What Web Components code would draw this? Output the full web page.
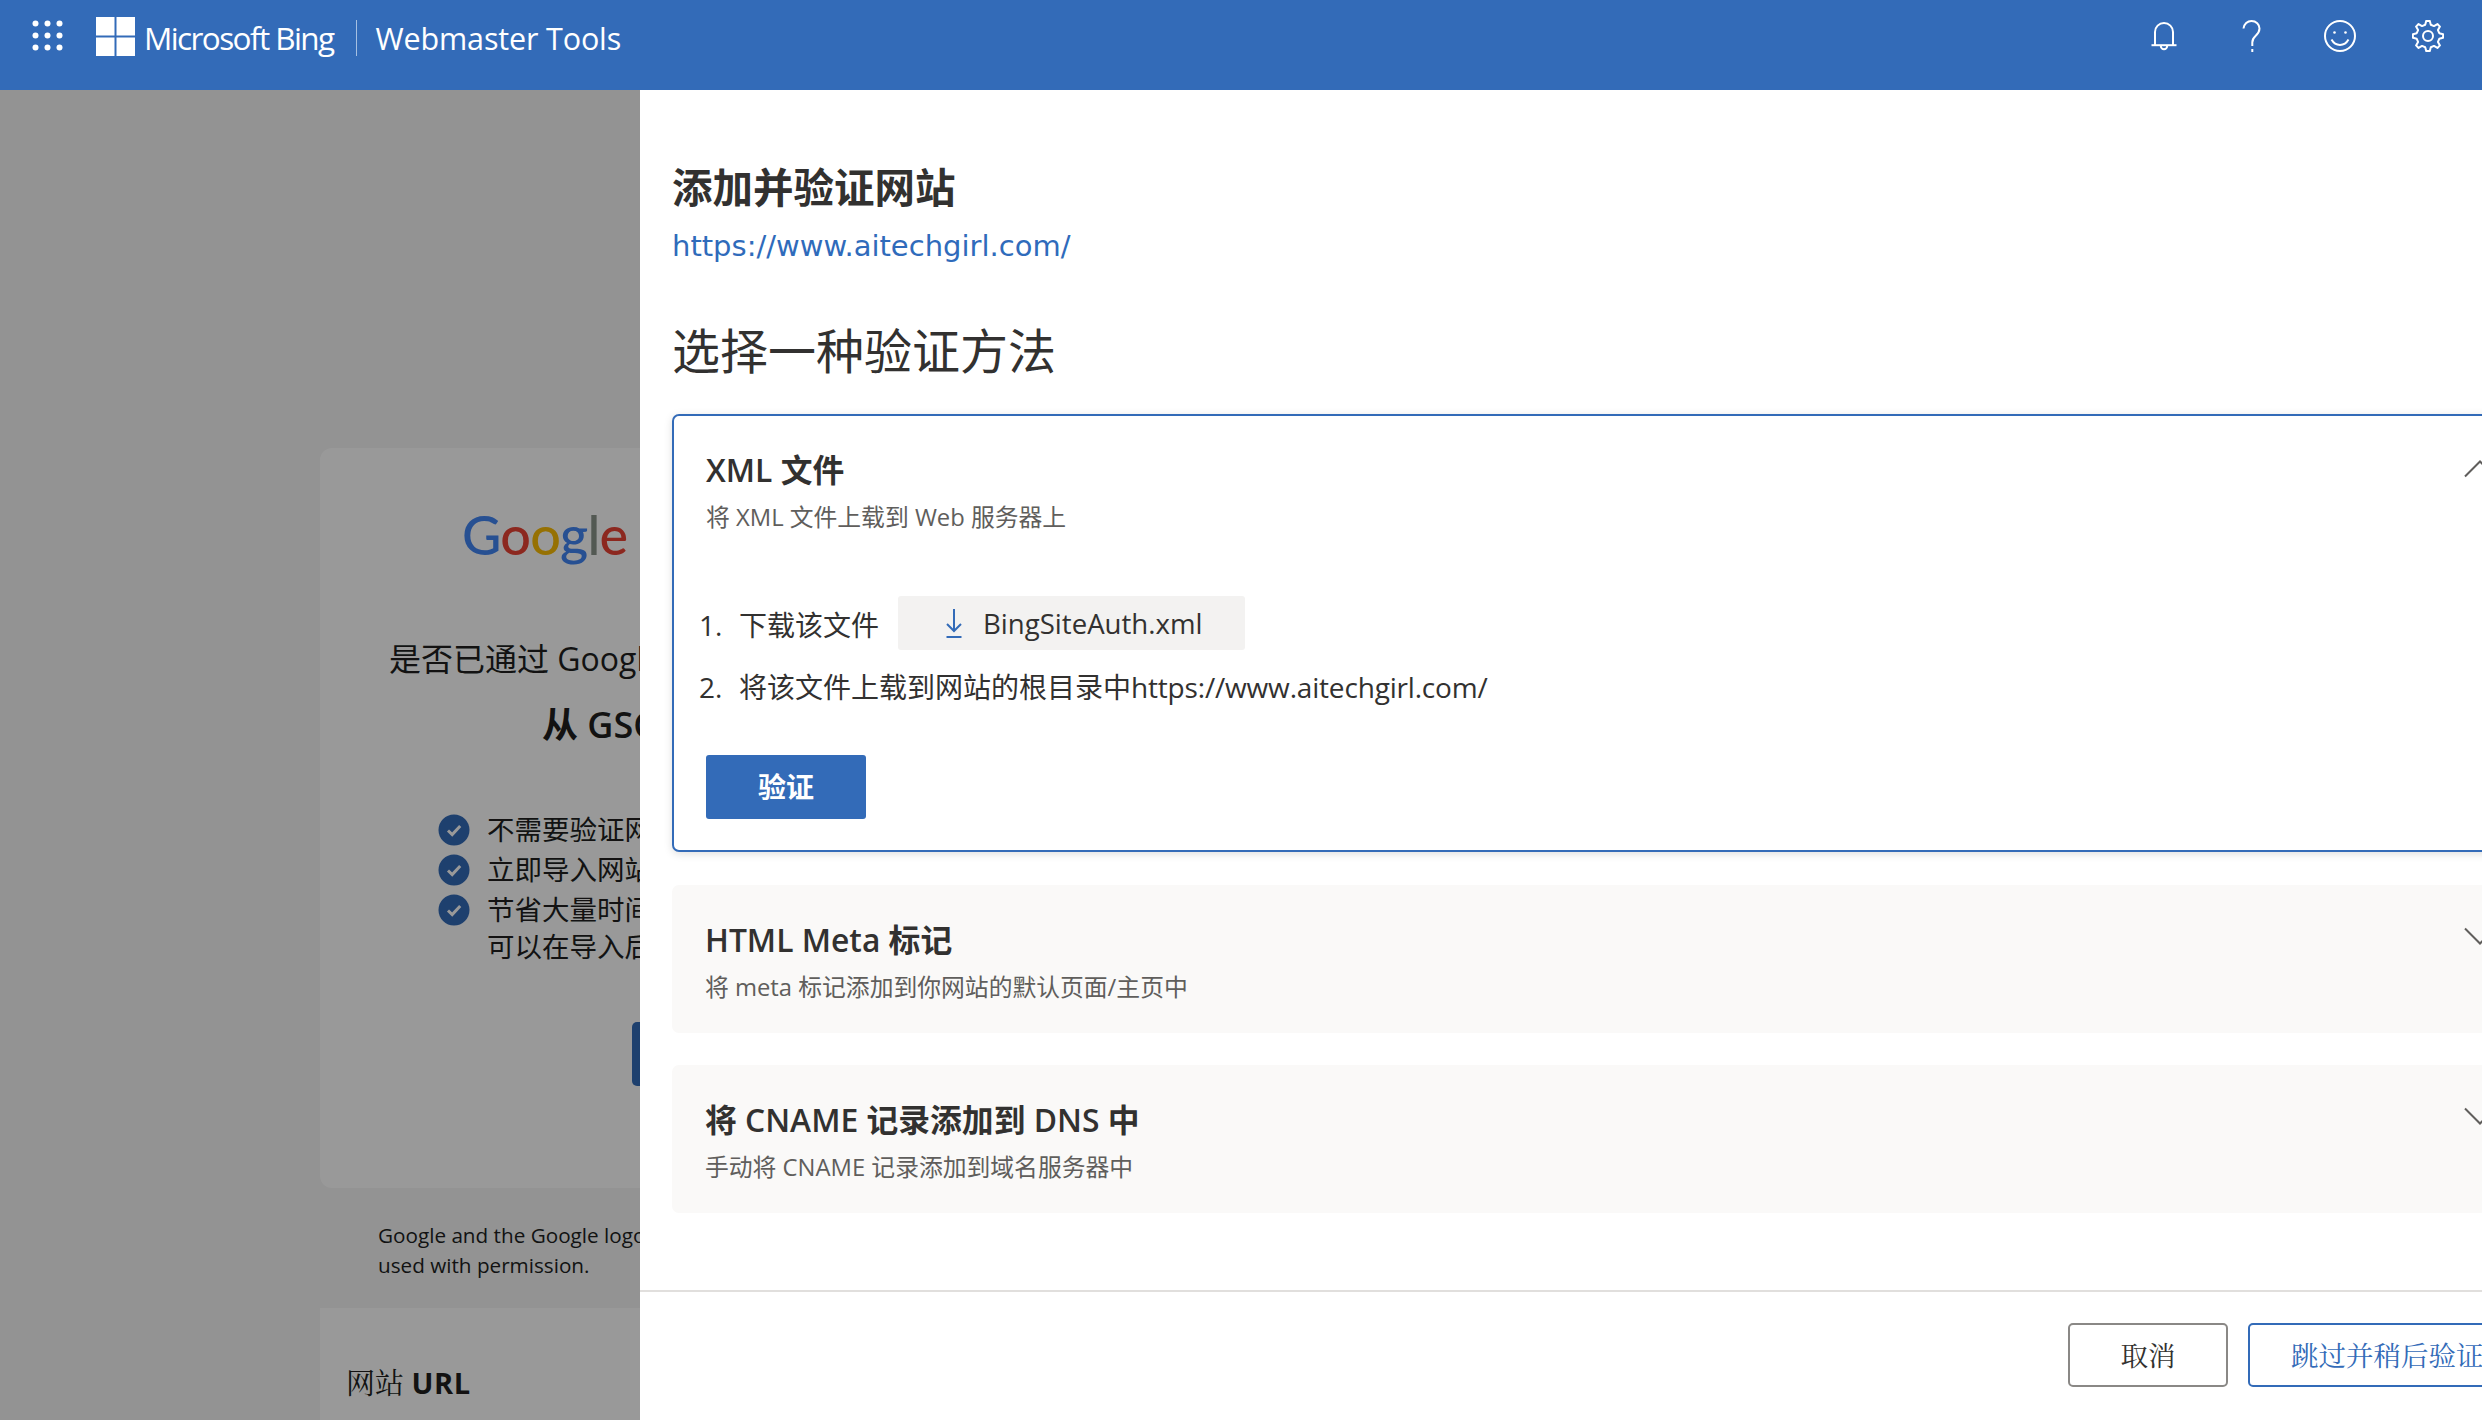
<!DOCTYPE html>
<html lang="zh-CN"><head><meta charset="utf-8"><title>Webmaster Tools</title>
<style>
html,body{margin:0;padding:0;height:100%;overflow:hidden;background:#f5f5f5;font-family:"Open Sans","Noto Sans CJK SC",sans-serif;color:#323130}
wm-app{display:block;width:2482px;height:1420px}
</style></head><body>
<wm-app>
  <wm-header></wm-header>
  <gsc-page></gsc-page>
  <verify-panel></verify-panel>
</wm-app>
<script>
const SANS='"Open Sans","Noto Sans CJK SC",sans-serif';
const SERIF='"Liberation Serif","Noto Serif CJK SC",serif';
function def(name,html,init){customElements.define(name,class extends HTMLElement{constructor(){super();this.attachShadow({mode:'open'}).innerHTML=html;}connectedCallback(){init&&init(this)}});}
function gear(){let d='';const n=8,R=15.2,r=11.6;for(let i=0;i<n;i++){const a=i*2*Math.PI/n-Math.PI/2,w=Math.PI/n;
 const p=[[r,a-w*.62],[R,a-w*.3],[R,a+w*.3],[r,a+w*.62]];p.forEach(([q,t],j)=>{d+=(i==0&&j==0?'M':'L')+(16+q*Math.cos(t)).toFixed(2)+' '+(16+q*Math.sin(t)).toFixed(2)});}return d+'Z';}

def('wm-app',`<style>:host{display:block;position:relative;width:2482px;height:1420px;overflow:hidden}</style><slot></slot>`);

def('wm-header',`<style>
:host{display:flex;align-items:flex-start;height:90px;background:#336bb8;color:#fff;font-family:${SANS};position:relative;z-index:3}
svg{display:block;flex:none}
.waffle{margin:20px 0 0 32px}.logo{margin:17px 0 0 32px}
.ms{margin:14px 0 0 9px;font-size:31.5px;line-height:48px;letter-spacing:-1.6px;white-space:nowrap}
.div{width:1px;height:36px;background:#a6c0e2;margin:20px 0 0 22px;flex:none}
.wt{margin:14px 0 0 19px;font-size:30.5px;line-height:48px;letter-spacing:-.15px;white-space:nowrap}
.icons{margin:20px 0 0 auto;display:flex;padding-right:38px;gap:56px}
.icons svg{width:32px;height:32px;fill:none;stroke:#fff;stroke-width:2}
</style>
<svg class="waffle" width="32" height="32" viewBox="0 0 32 32" fill="#fff"><circle cx="3.5" cy="3.5" r="3"/><circle cx="15.5" cy="3.5" r="3"/><circle cx="27.5" cy="3.5" r="3"/><circle cx="3.5" cy="15.5" r="3"/><circle cx="15.5" cy="15.5" r="3"/><circle cx="27.5" cy="15.5" r="3"/><circle cx="3.5" cy="27.5" r="3"/><circle cx="15.5" cy="27.5" r="3"/><circle cx="27.5" cy="27.5" r="3"/></svg>
<svg class="logo" width="39" height="39" viewBox="0 0 39 39" fill="#fff"><rect width="18.5" height="18.5"/><rect x="20.5" width="18.5" height="18.5"/><rect y="20.5" width="18.5" height="18.5"/><rect x="20.5" y="20.5" width="18.5" height="18.5"/></svg>
<span class="ms">Microsoft Bing</span><span class="div"></span><span class="wt">Webmaster Tools</span>
<div class="icons">
<svg viewBox="0 0 32 32"><path d="M7 25V12a9 9 0 0 1 18 0v13"/><path d="M3.5 25.2h25"/><path d="M12.8 26a3.2 3.2 0 0 0 6.4 0"/></svg>
<svg viewBox="0 0 32 32"><path d="M7.500 8.500C8 4 11.500 1 15.500 1c4.600 0 8 3.200 8 7.600 0 3.400-1.600 5.200-4 7.400-2 1.800-3.200 3.400-3.200 6.400v3.600"/><path d="M16.300 29v3"/></svg>
<svg viewBox="0 0 32 32"><circle cx="16" cy="16" r="15"/><circle cx="10.5" cy="12.5" r="1.3" fill="#fff" stroke="none"/><circle cx="21.5" cy="12.5" r="1.3" fill="#fff" stroke="none"/><path d="M7.500 19.500c2 3.600 5 5.400 8.500 5.400s6.500-1.800 8.500-5.400"/></svg>
<svg viewBox="0 0 32 32"><path id="g" stroke-linejoin="round" d="${gear()}"/><circle cx="16" cy="16" r="5"/></svg>
</div>`);

def('gsc-page',`<style>
:host{display:block;position:absolute;left:0;top:90px;right:0;bottom:0;overflow:hidden;padding:358px 0 0 320px;background:#f5f5f5;font-family:${SANS};color:#201f1e}
.card{width:1800px;height:740px;box-sizing:border-box;background:#fff;border-radius:12px;padding:49px 0 0 0;position:relative}
.logo{margin:0 0 0 142px;height:76px;font:500 54px/76px "Lato",${SANS};letter-spacing:-.8px;white-space:nowrap}
.b{color:#4285f4}.r{color:#ea4335}.y{color:#fbbc05}.g{color:#8a948a}.sc{color:#5f6368;font-weight:400;margin-left:12px}
.ask{margin:64px 0 0 69px;font-size:32px;line-height:44px;white-space:nowrap}
.from{margin:22px 0 0 222px;font-size:36px;line-height:44px;font-weight:600;white-space:nowrap}
ul{list-style:none;margin:63px 0 0 118px;padding:0;font-size:27.5px;line-height:40px}
li{display:flex;gap:17px;align-items:flex-start;white-space:nowrap}
.more{margin:-2px 0 0 49px;display:block;white-space:nowrap;line-height:38px}
.go{margin:56px 0 0 312px;width:320px;height:64px;background:#336bb8;border-radius:5px}
.note{margin:32px 0 0 58px;font-size:20.7px;line-height:30px;width:800px;white-space:nowrap}
.card2{margin-top:28px;width:1800px;height:300px;background:#fff;padding:56px 0 0 26px;box-sizing:border-box;font-size:29px;line-height:38px;white-space:nowrap;overflow:hidden}
.card2 .s{font-family:${SERIF}}
.card2 b{font-weight:700;letter-spacing:.6px}
</style>
<div class="card">
 <div class="logo"><span class="b">G</span><span class="r">o</span><span class="y">o</span><span class="b">g</span><span class="g">l</span><span class="r">e</span><span class="sc">Search Console</span></div>
 <div class="ask">是否已通过 Google Search Console 验证网站？</div>
 <div class="from">从 GSC 导入网站</div>
 <ul>
  <li><wm-check></wm-check>不需要验证网站所有权</li>
  <li><wm-check></wm-check>立即导入网站和站点地图</li>
  <li><wm-check></wm-check>节省大量时间</li>
  <span class="more">可以在导入后添加其他网站</span>
 </ul>
 <div class="go"></div>
</div>
<div class="note">Google and the Google logo are trademarks of Google LLC,<br>used with permission.</div>
<div class="card2"><span class="s">网站</span> <b>URL</b></div>`);

def('wm-check',`<style>:host{display:block;flex:none;width:32px;height:32px;margin-top:4px}svg{display:block}</style>
<svg width="32" height="32" viewBox="0 0 32 32"><circle cx="16" cy="16" r="15.5" fill="#336bb8"/><path d="M10 16.500l4.200 4 8-8.500" fill="none" stroke="#fff" stroke-width="3"/></svg>`);

def('verify-panel',`<style>
:host{display:flex;flex-direction:column;position:absolute;left:0;top:90px;width:2482px;height:1330px;overflow:hidden;z-index:2;font-family:${SANS};color:#323130}
.scrim{position:absolute;inset:0 auto 0 0;width:640px;background:rgba(0,0,0,.4)}
.sheet{position:absolute;left:640px;top:0;width:1900px;height:1330px;background:#fff;box-sizing:border-box;padding:70px 0 0 32px;display:flex;flex-direction:column}
h2{margin:0;font-size:40.5px;line-height:56px;font-weight:700;white-space:nowrap}
a{display:block;margin-top:10px;color:#2f6bbb;font:29px/40px "DejaVu Sans",sans-serif;text-decoration:none;white-space:nowrap}
h1{margin:53px 0 0;font-size:48px;line-height:64px;font-weight:400;white-space:nowrap}
.list{display:flex;flex-direction:column;gap:32px;margin-top:31px;width:1860px}
.list method-card:first-child{margin-bottom:1px}
footer{margin:77px 0 0 -32px;border-top:2px solid #e1dfdd;padding:31px 0 0 1428px;display:flex;gap:20px}
</style>
<div class="scrim"></div>
<div class="sheet">
<h2>添加并验证网站</h2>
<a>https://www.aitechgirl.com/</a>
<h1>选择一种验证方法</h1>
<div class="list">
 <method-card open heading="XML 文件" sub="将 XML 文件上载到 Web 服务器上">
   <xml-steps></xml-steps>
 </method-card>
 <method-card heading="HTML Meta 标记" sub="将 meta 标记添加到你网站的默认页面/主页中"></method-card>
 <method-card heading="将 CNAME 记录添加到 DNS 中" sub="手动将 CNAME 记录添加到域名服务器中"></method-card>
</div>
<footer><wm-button>取消</wm-button><wm-button kind="skip">跳过并稍后验证</wm-button></footer>
</div>`);

customElements.define('method-card',class extends HTMLElement{
 constructor(){super();const s=this.attachShadow({mode:'open'});const o=this.hasAttribute('open');
 s.innerHTML=`<style>
 :host{display:block;position:relative;box-sizing:border-box;border-radius:7px;font-family:${SANS};padding:33px 0 28px 33px;background:#faf9f8}
 :host([open]){background:#fff;border:2px solid #336bb8;padding:32px 0 31px 32px;box-shadow:0 2px 8px rgba(0,0,0,.13)}
 .t{font-size:31.8px;line-height:44px;font-weight:600;color:#323130;white-space:nowrap}
 .s{margin-top:7px;font-size:23.8px;line-height:36px;color:#605e5c;white-space:nowrap}
 svg{position:absolute;left:1792px;top:${o?44:42}px;fill:none;stroke:#605e5c;stroke-width:2}
 :host([open]) svg{left:1790px}
 </style>
 <div class="t">${this.getAttribute('heading')}</div><div class="s">${this.getAttribute('sub')}</div>
 <svg width="32" height="18" viewBox="0 0 32 18"><path d="${o?'M1 16.500L16 1.500L31 16.500':'M1 1.500L16 16.500L31 1.500'}"/></svg>
 <slot></slot>`}});

def('xml-steps',`<style>
:host{display:block;margin:60.5px 0 0 -6px;font-family:${SANS};color:#323130;font-size:28px;line-height:40px}
.row{display:flex;align-items:center;white-space:nowrap}
.n{width:39px;flex:none;margin-left:-1px;padding-right:1px}
.lower{position:relative;top:2px;display:inline-flex}
.r1{height:54px}.r2{margin-top:17px;height:40px}
.u{letter-spacing:-.18px}
.dl{display:flex;align-items:center;margin-left:19px;width:347px;height:54px;background:#f3f2f1;border-radius:3px;box-sizing:border-box;padding-left:47px;font-weight:500;gap:20px;font-size:27.6px}
.dl svg{flex:none}
.go{display:flex;align-items:center;justify-content:center;width:160px;height:64px;background:#336bb8;color:#fff;font-weight:700;border-radius:3px;margin:48px 0 0 6px}
</style>
<div class="row r1"><span class="n lower">1.</span><span class="lower">下载该文件</span><span class="dl"><svg width="18" height="30" viewBox="0 0 18 30" fill="none" stroke="#336bb8" stroke-width="2"><path d="M9 1v22M2 16l7 7 7-7"/><path d="M1.500 29h15"/></svg>BingSiteAuth.xml</span></div>
<div class="row r2"><span class="n">2.</span>将该文件上载到网站的根目录中<span class="u">https://www.aitechgirl.com/</span></div>
<div class="go">验证</div>`);

customElements.define('wm-button',class extends HTMLElement{constructor(){super();const sk=this.getAttribute('kind')=='skip';
 this.attachShadow({mode:'open'}).innerHTML=`<style>:host{display:flex;flex:none;align-items:center;justify-content:${sk?'flex-start':'center'};box-sizing:border-box;height:64px;padding-top:4px;border-radius:5px;font:27.5px/40px ${SERIF};white-space:nowrap;
 ${sk?'padding-left:41px;':''}width:${sk?'284px':'160px'};border:2px solid ${sk?'#336bb8':'#8a8886'};color:${sk?'#336bb8':'#323130'}}</style><slot></slot>`}});
</script>
</body></html>
